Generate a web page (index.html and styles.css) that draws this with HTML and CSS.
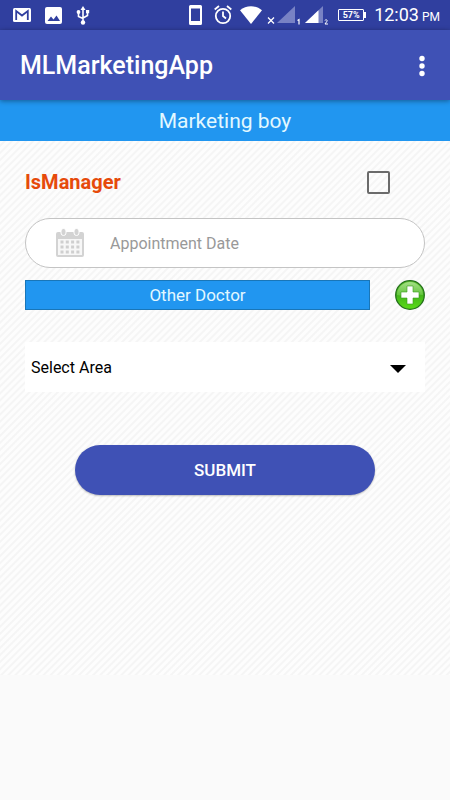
FILE: index.html
```html
<!DOCTYPE html>
<html lang="en">
<head>
<meta charset="utf-8">
<meta name="viewport" content="width=device-width, initial-scale=1">
<title>MLMarketingApp</title>
<link rel="stylesheet" href="styles.css">
</head>
<body>
<div class="status">
  <div class="status-group notices">
    <svg width="18" height="14" viewBox="0 0 18 14"><rect width="18" height="14" rx="1.5" fill="#fff"/><path d="M3.2 12V3L9 7.5 14.8 3v9" fill="none" stroke="#303f9f" stroke-width="1.8"/></svg>
    <svg width="17" height="17" viewBox="0 0 17 17"><rect width="17" height="17" rx="2" fill="#fff"/><path d="M2.5 14l3.5-4.500 2.500 3 3-4 3.500 5.500z" fill="#303f9f"/></svg>
    <svg width="14" height="19" viewBox="0 0 14 19"><g fill="none" stroke="#fff" stroke-width="1.600"><path d="M7 3v13M2.500 6v4.500L7 12.500M11.500 6v3.500L7 12"/></g><path d="M7 0l2.500 4h-5zM10 4h3.200v3.200H10z" fill="#fff"/><circle cx="2.500" cy="6" r="1.900" fill="#fff"/><circle cx="7" cy="16.500" r="2.200" fill="#fff"/></svg>
  </div>
  <div class="status-group system">
    <svg width="13" height="20" viewBox="0 0 13 20"><path fill="#fff" fill-rule="evenodd" d="M1.500 0h10A1.500 1.500 0 0 1 13 1.500v17a1.500 1.500 0 0 1-1.500 1.500h-10A1.500 1.500 0 0 1 0 18.500v-17A1.500 1.500 0 0 1 1.500 0zM2 3.500v12.500h9V3.500z"/></svg>
    <svg class="alarm" width="18" height="20" viewBox="0 0 18 20"><g fill="none" stroke="#fff" stroke-width="1.800"><circle cx="9" cy="11" r="7.200"/><path d="M.7 4.500L5 1M17.300 4.500L13 1M9 6.500V11l3 2.500"/></g></svg>
    <svg class="wifi" width="22" height="18" viewBox="0 0 22 18"><path d="M0 4.200C6-1.100 16-1.100 22 4.200L11 18z" fill="#fff"/></svg>
    <svg class="signal" width="34" height="20" viewBox="0 0 34 20"><path d="M1 12.500l6 6M7 12.500l-6 6" stroke="#fff" stroke-width="1.300"/><path d="M28 1v17H10z" fill="#7882c4"/><path d="M30.500 15.500l1.500-1v5" fill="none" stroke="#fff" stroke-width="1.200"/></svg>
    <svg class="signal-two" width="24" height="20" viewBox="0 0 24 20"><path d="M18 1v17H0z" fill="#7882c4"/><path d="M13.500 5.200V18H0z" fill="#fff"/><path d="M20 15.500c.5-1.500 2.600-.8 2 .7L20 19h3" fill="none" stroke="#fff" stroke-width="1"/></svg>
    <span class="battery">57%</span>
    <span class="clock"><span>12:03</span><small>PM</small></span>
  </div>
</div>
<header class="appbar">
  <h1>MLMarketingApp</h1>
  <button class="more" type="button" aria-label="More options"><svg width="8" height="22" viewBox="0 0 8 22" fill="#fff"><circle cx="4" cy="3.500" r="2.700"/><circle cx="4" cy="11" r="2.700"/><circle cx="4" cy="18.500" r="2.700"/></svg></button>
</header>
<main>
  <h2 class="role">Marketing boy</h2>
  <form class="form">
    <div class="manager">
      <label for="manager">IsManager</label>
      <input id="manager" type="checkbox">
    </div>
    <div class="date">
      <svg width="30" height="30" viewBox="0 0 30 30"><rect x="1" y="4" width="28" height="25" rx="2" fill="#d3d3d3"/><rect x="3" y="11" width="24" height="16" fill="#f7f7f7"/><g fill="#d3d3d3" stroke="#fff" stroke-width="1"><rect x="6" y="0.500" width="5" height="7" rx="2.500"/><rect x="19" y="0.500" width="5" height="7" rx="2.500"/></g><g stroke="#cfcfcf" stroke-width="3" stroke-dasharray="3 2.300"><path d="M5.500 14h19M5.500 19h19M5.500 24h19"/></g></svg>
      <input type="text" placeholder="Appointment Date" aria-label="Appointment Date">
    </div>
    <div class="doctor">
      <button class="other" type="button">Other Doctor</button>
      <button class="add" type="button" aria-label="Add doctor"><svg width="30" height="30" viewBox="0 0 30 30"><defs><linearGradient id="green" x1="0" y1="0" x2="0" y2="1"><stop offset="0" stop-color="#65c634"/><stop offset=".5" stop-color="#43b51b"/><stop offset="1" stop-color="#5bdc18"/></linearGradient><linearGradient id="gloss" x1="0" y1="0" x2="0" y2="1"><stop offset="0" stop-color="#b4e69b"/><stop offset="1" stop-color="#69c742"/></linearGradient></defs><circle cx="15" cy="15" r="14.300" fill="url(#green)" stroke="#24701b" stroke-width="1.300"/><path d="M2 15C2 7.500 8 2 15 2s13 5.500 13 13c-8-2-18 2-26 0z" fill="url(#gloss)" opacity=".8"/><path d="M12 6h6v6h6v6h-6v6h-6v-6H6v-6h6z" fill="#fff" stroke="#3b9b20" stroke-width=".6"/></svg></button>
    </div>
    <div class="area">
      <select aria-label="Area"><option>Select Area</option></select>
      <svg width="16" height="8" viewBox="0 0 16 8"><path d="M0 0h16L8 8z"/></svg>
    </div>
    <button class="submit" type="submit">SUBMIT</button>
  </form>
</main>
</body>
</html>
```
FILE: styles.css
```css
* { box-sizing: border-box; }

body {
  margin: 0;
  background: #fafafa;
  font-family: Roboto, "Liberation Sans", sans-serif;
  color: #000;
}

button, input, select { font: inherit; margin: 0; }
button { border: 0; padding: 0; cursor: pointer; }
svg { display: block; flex: none; }

.status {
  display: flex;
  justify-content: space-between;
  align-items: center;
  height: 30px;
  padding: 0 10px 0 13px;
  background: #303f9f;
  color: #fff;
}
.status-group { display: flex; align-items: center; }
.notices { gap: 14px; }
.alarm { margin-left: 12px; }
.wifi { margin-left: 8px; }
.signal { margin-left: 5px; }
.signal-two { margin-left: 4px; }
.battery {
  position: relative;
  width: 26px;
  height: 12px;
  margin: 0 10px 0 9px;
  border: 1px solid #fff;
  border-radius: 1px;
  font-size: 9px;
  font-weight: 700;
  line-height: 10px;
  text-align: center;
}
.battery::after {
  content: "";
  position: absolute;
  top: 2px;
  right: -3px;
  width: 2px;
  height: 6px;
  background: #fff;
}
.clock {
  display: flex;
  align-items: baseline;
  gap: 3px;
  padding-top: 2px;
  font-size: 18px;
  line-height: 20px;
}
.clock small { font-size: 12px; }

.appbar {
  position: relative;
  display: flex;
  justify-content: space-between;
  align-items: center;
  height: 70px;
  padding: 2px 16px 0 20px;
  background: #3f51b5;
  box-shadow: 0 1px 5px rgba(0, 0, 0, .4);
  color: #fff;
}
.appbar h1 { margin: 0; font-size: 25px; font-weight: 500; line-height: 32px; }
.more { display: flex; justify-content: center; width: 24px; background: none; }

.role {
  margin: 0;
  padding: 6px 0 5px;
  background: #2196f0;
  color: #e2f8ff;
  font-size: 21px;
  font-weight: 400;
  line-height: 30px;
  text-align: center;
}

.form {
  padding: 20px 25px 180px;
  background: repeating-linear-gradient(135deg, #fdfdfd 0 2px, #f5f5f5 3px 4px, #fdfdfd 5px);
}
.manager {
  display: flex;
  justify-content: space-between;
  align-items: center;
  height: 42px;
  padding-right: 35px;
}
.manager label { color: #e64a0b; font-size: 20px; font-weight: 700; }
.manager input {
  appearance: none;
  width: 23px;
  height: 23px;
  border: 2px solid #6b6b6b;
  border-radius: 2px;
}
.manager input:checked { background: #3f51b5; }

.date {
  display: flex;
  align-items: center;
  gap: 25px;
  height: 50px;
  margin-top: 15px;
  padding: 0 29px;
  border: 1px solid #c4c4c4;
  border-radius: 25px;
  background: #fff;
}
.date input {
  flex: 1;
  min-width: 0;
  padding: 0;
  border: 0;
  outline: 0;
  background: none;
  font-size: 16px;
}
.date input::placeholder { color: #999; opacity: 1; }

.doctor { display: flex; gap: 25px; margin-top: 12px; }
.other {
  flex: 1;
  height: 30px;
  border: 1px solid #1976b8;
  background: #2196f0;
  color: #e2f8ff;
  font-size: 17px;
}
.add { background: none; }

.area { position: relative; margin-top: 32px; }
.area select {
  display: block;
  appearance: none;
  width: 100%;
  height: 50px;
  padding: 0 48px 0 6px;
  border: 0;
  border-radius: 0;
  background: #fff;
  color: #000;
  font-size: 16px;
}
.area svg { position: absolute; top: 23px; right: 19px; pointer-events: none; }

.submit {
  display: block;
  width: 75%;
  height: 50px;
  margin: 53px auto 0;
  border-radius: 25px;
  background: #3f51b5;
  box-shadow: 0 1px 2px rgba(0, 0, 0, .25);
  color: #fff;
  font-size: 17px;
  font-weight: 500;
}
```
